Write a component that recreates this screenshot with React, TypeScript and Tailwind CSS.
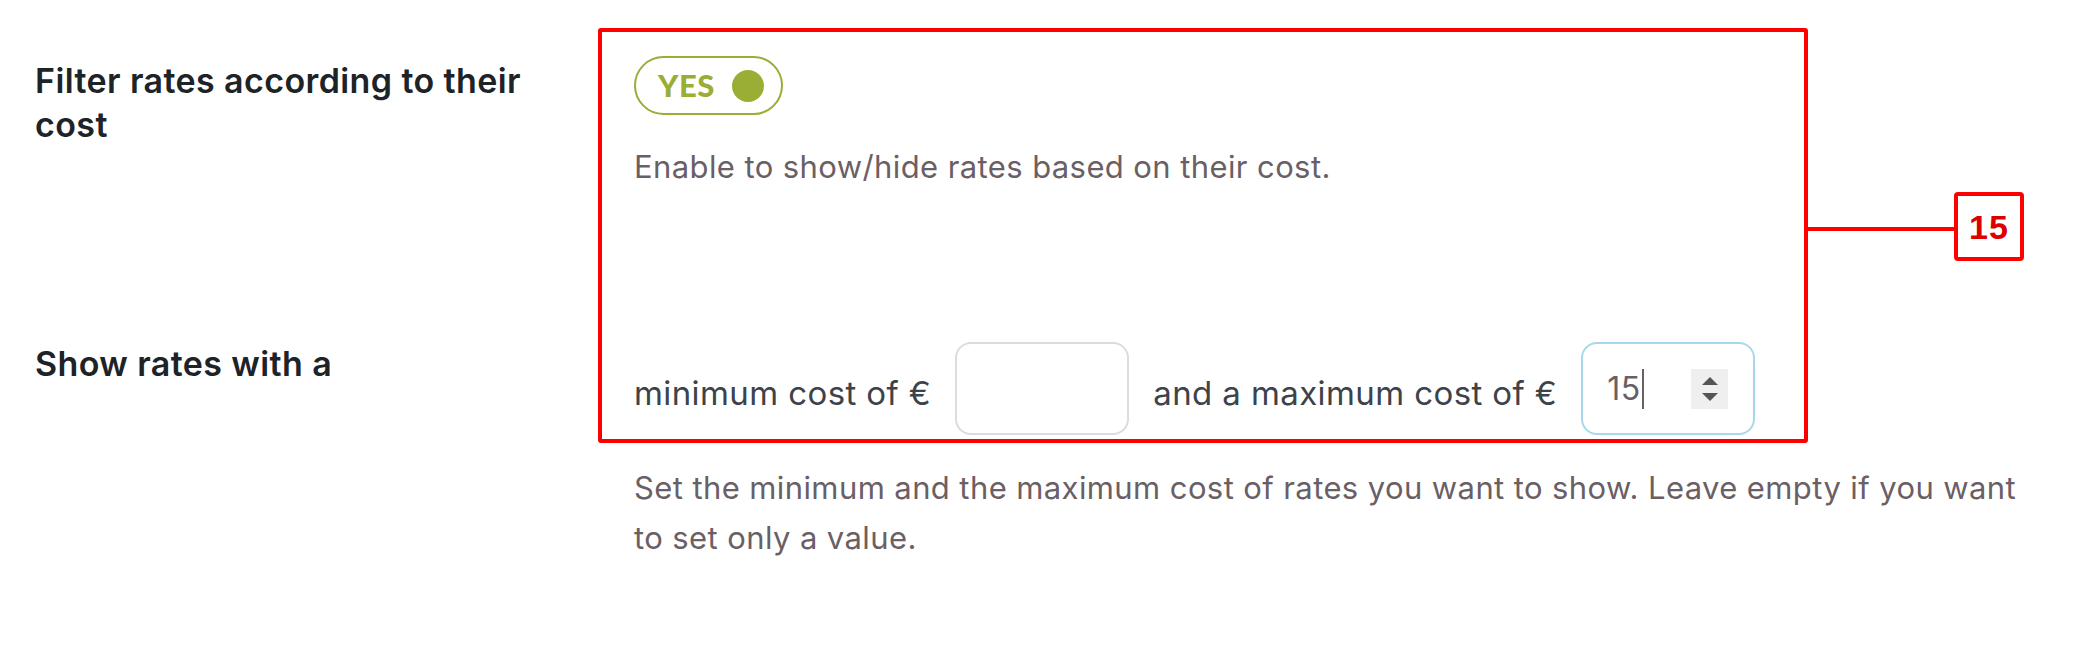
import React from 'react';

function Toggle() {
  return (
    <div className="flex items-center justify-between w-[149px] h-[59px] rounded-full border-2 border-[#9aad35] pl-[22px] pr-[17px]">
      <span className="font-['Lato'] font-black text-[31px] text-[#9aad35] tracking-[0.5px]">YES</span>
      <span className="w-[32px] h-[32px] rounded-full bg-[#9aad35]" />
    </div>);

}

function NumberBox({ value, focused }: { value?: string; focused?: boolean }) {
  return (
    <div
      className={
      focused ?
      'flex items-center w-[174px] h-[93px] rounded-[16px] border-2 border-[#a9d8ec] pl-[24px] pr-[25px]' :
      'flex items-center w-[174px] h-[93px] rounded-[16px] border-2 border-[#dcdcde] pl-[24px] pr-[25px]'
      }>
      
      {value &&
      <>
          <span className="text-[32px] leading-none text-[#6b5f66]">{value}</span>
          <span className="w-[2px] h-[40px] bg-[#6b5f66] ml-[1px]" />
          <div className="ml-auto flex flex-col items-center justify-center gap-[8px] w-[37px] h-[40px] bg-[#efefef]">
            <span className="w-0 h-0 border-x-[8px] border-x-transparent border-b-[8px] border-b-[#555]" />
            <span className="w-0 h-0 border-x-[8px] border-x-transparent border-t-[8px] border-t-[#555]" />
          </div>
        </>
      }
    </div>);

}

export default function App() {
  return (
    <div className="relative w-[2078px] h-[664px] bg-white font-['Inter',sans-serif]">
      <div className="pt-[56px]">
        <div className="flex">
          <div className="w-[634px] pl-[35px] pr-[90px] pt-[3px]">
            <h3 className="text-[34px] leading-[44px] font-semibold tracking-[0.4px] text-[#1d2327]">
              Filter rates according to their cost
            </h3>
          </div>
          <div>
            <Toggle />
            <p className="mt-[27px] text-[31px] leading-[50px] tracking-[0.4px] text-[#6b5f66]">
              Enable to show/hide rates based on their cost.
            </p>
          </div>
        </div>

        <div className="flex mt-[150px]">
          <div className="w-[634px] pl-[35px]">
            <h3 className="text-[34px] leading-[44px] font-semibold tracking-[0.4px] text-[#1d2327]">Show rates with a</h3>
          </div>
          <div>
            <div className="flex items-center gap-[24px] text-[33px] leading-[50px] tracking-[0.4px] text-[#3c434a]">
              <span className="pt-[8px]">minimum cost of €</span>
              <NumberBox />
              <span className="pt-[8px]">and a maximum cost of €</span>
              <NumberBox value="15" focused />
            </div>
            <p className="mt-[28px] w-[1395px] text-[31px] leading-[50px] tracking-[0.4px] text-[#6b5f66]">
              Set the minimum and the maximum cost of rates you want to show. Leave empty if you want to set only a value.
            </p>
          </div>
        </div>
      </div>

      {/* annotation */}
      <div className="absolute left-[598px] top-[28px] w-[1210px] h-[415px] border-4 border-[#ff0000] rounded-[3px]" />
      <div className="absolute left-[1808px] top-[227px] w-[148px] h-[4px] bg-[#ff0000]" />
      <div className="absolute left-[1954px] top-[192px] w-[70px] h-[69px] border-4 border-[#ff0000] rounded-[4px] bg-white flex items-center justify-center">
        <span className="font-['Liberation_Sans',sans-serif] font-bold text-[34px] leading-none text-[#dd0000] tracking-[1px]">15</span>
      </div>
    </div>);

}
